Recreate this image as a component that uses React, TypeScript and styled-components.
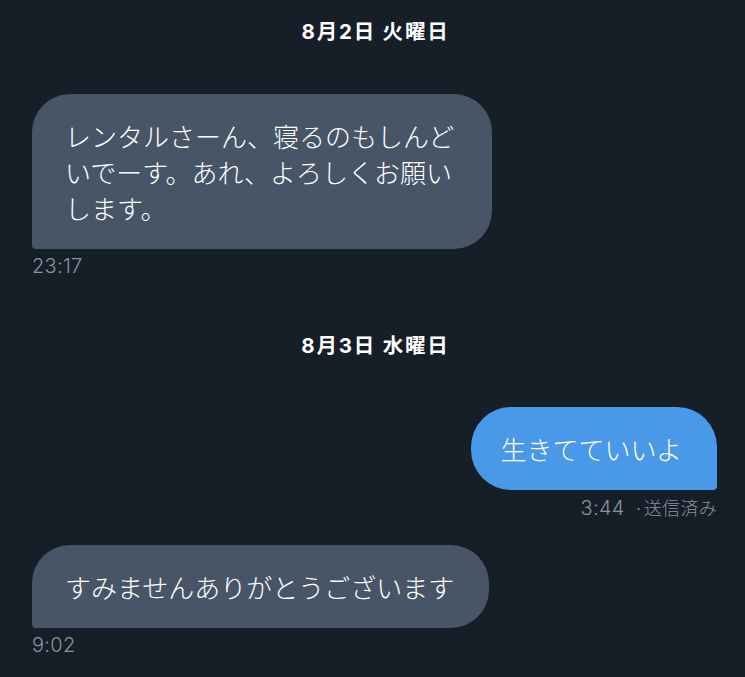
import React from "react";
import styled, { createGlobalStyle, css } from "styled-components";

const Global = createGlobalStyle`
  html, body {
    margin: 0;
    padding: 0;
    background: #161e28;
  }
  body {
    font-family: "Inter", "Noto Sans CJK JP", sans-serif;
    -webkit-font-smoothing: antialiased;
  }
`;

const Thread = styled.div`
  display: flex;
  flex-direction: column;
  min-height: 677px;
  padding: 18px 28px 0 32px;
  box-sizing: border-box;
  background: #161e28;
`;

const DateHeader = styled.div<{ $gapBelow: number }>`
  align-self: center;
  margin-left: 2px;
  height: 28px;
  line-height: 28px;
  font-size: 20.5px;
  font-weight: 700;
  letter-spacing: 1.8px;
  color: #ffffff;
  margin-bottom: ${(p) => p.$gapBelow}px;
`;

const Group = styled.div<{ $mine?: boolean; $gapBelow: number }>`
  display: flex;
  flex-direction: column;
  align-items: ${(p) => (p.$mine ? "flex-end" : "flex-start")};
  gap: 5px;
  margin-bottom: ${(p) => p.$gapBelow}px;
`;

const Bubble = styled.div<{ $mine?: boolean }>`
  box-sizing: border-box;
  max-width: 460px;
  padding: 24px 35px 23px 33px;
  font-family: "Noto Sans CJK JP", sans-serif;
  font-size: 26px;
  line-height: 36px;
  font-weight: 300;
  color: #ffffff;
  ${(p) =>
    p.$mine
      ? css`
          background: #4a98e8;
          border-radius: 40px 40px 4px 40px;
          padding-left: 30px;
          padding-right: 35px;
        `
      : css`
          background: #475566;
          border-radius: 38px 38px 38px 4px;
        `}
`;

const Meta = styled.div`
  height: 24px;
  line-height: 24px;
  font-size: 20px;
  color: #8894a1;
  font-weight: 300;
  letter-spacing: 0.3px;
`;

const Status = styled.span`
  font-family: "Noto Sans CJK JP", sans-serif;
  font-size: 18px;
  font-weight: 300;
  margin-left: 9px;
`;

export default function App() {
  return (
    <>
      <Global />
      <Thread>
        <DateHeader $gapBelow={48}>8月2日 火曜日</DateHeader>
        <Group $gapBelow={54}>
          <Bubble>
            レンタルさーん、寝るのもしんどいでーす。あれ、よろしくお願いします。
          </Bubble>
          <Meta>23:17</Meta>
        </Group>
        <DateHeader $gapBelow={47}>8月3日 水曜日</DateHeader>
        <Group $mine $gapBelow={26}>
          <Bubble $mine>生きてていいよ</Bubble>
          <Meta>
            3:44<Status>·送信済み</Status>
          </Meta>
        </Group>
        <Group $gapBelow={0}>
          <Bubble>すみませんありがとうございます</Bubble>
          <Meta>9:02</Meta>
        </Group>
      </Thread>
    </>
  );
}
